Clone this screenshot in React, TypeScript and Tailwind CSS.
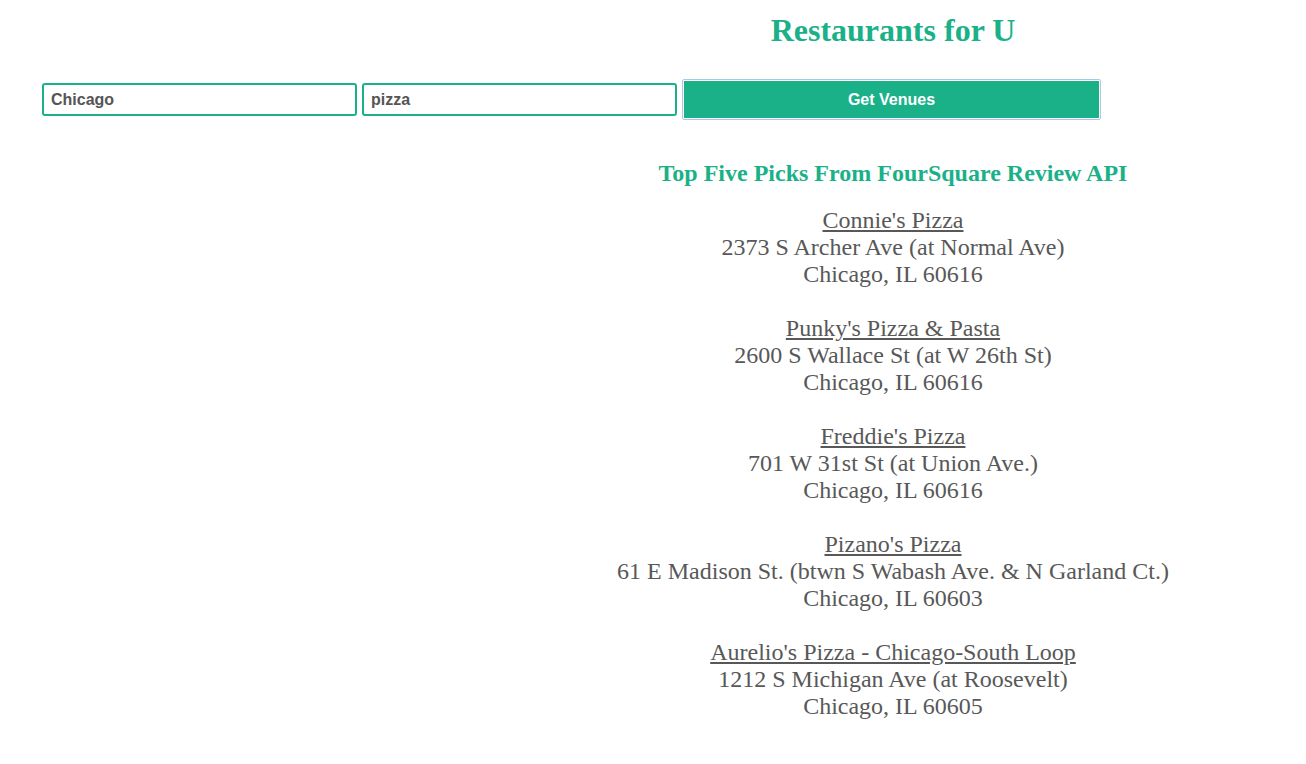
const venues = [
  { name: "Connie's Pizza", address: "2373 S Archer Ave (at Normal Ave)", city: "Chicago, IL 60616" },
  { name: "Punky's Pizza & Pasta", address: "2600 S Wallace St (at W 26th St)", city: "Chicago, IL 60616" },
  { name: "Freddie's Pizza", address: "701 W 31st St (at Union Ave.)", city: "Chicago, IL 60616" },
  { name: "Pizano's Pizza", address: "61 E Madison St. (btwn S Wabash Ave. & N Garland Ct.)", city: "Chicago, IL 60603" },
  { name: "Aurelio's Pizza - Chicago-South Loop", address: "1212 S Michigan Ave (at Roosevelt)", city: "Chicago, IL 60605" },
];

const App = () => {
  return (
    <div className="min-h-screen bg-white font-['Liberation_Serif',serif]">
      {/* Title */}
      <div className="flex">
        <div className="w-[480px] shrink-0" />
        <h1 className="flex-1 pt-[12px] text-center text-[32px] font-bold leading-[36px] text-[#1ab188]">
          Restaurants for U
        </h1>
      </div>

      {/* Search form */}
      <div className="mt-[31px] flex items-center gap-[5px] pl-[42px] font-['Liberation_Sans',Arial,sans-serif]">
        <input
          defaultValue="Chicago"
          className="h-[33px] w-[315px] rounded-[3px] border-2 border-[#1ab188] px-[7px] text-[16px] font-bold text-[#555] outline-none"
        />
        <input
          defaultValue="pizza"
          className="h-[33px] w-[315px] rounded-[3px] border-2 border-[#1ab188] px-[7px] text-[16px] font-bold text-[#555] outline-none"
        />
        <button className="h-[41px] w-[419px] rounded-[2px] border border-[#a9c9ec] bg-white p-px">
          <div className="flex h-full w-full items-center justify-center bg-[#1ab188] text-[16px] font-bold text-white">
            Get Venues
          </div>
        </button>
      </div>

      {/* Results */}
      <div className="flex">
        <div className="w-[480px] shrink-0" />
        <div className="flex-1 text-center">
          <h2 className="mt-[39px] text-[24px] font-bold leading-[28px] text-[#1ab188]">
            Top Five Picks From FourSquare Review API
          </h2>
          <div className="mt-[20px] flex flex-col gap-[27px] text-[24px] leading-[27px] text-[#585858]">
            {venues.map((v) => (
              <div key={v.name}>
                <div><a href="#" className="underline">{v.name}</a></div>
                <div>{v.address}</div>
                <div>{v.city}</div>
              </div>
            ))}
          </div>
        </div>
      </div>
    </div>
  );
};

export default App;
